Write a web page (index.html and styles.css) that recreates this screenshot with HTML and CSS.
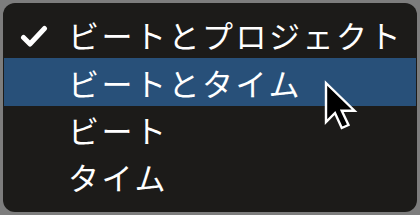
FILE: index.html
```html
<!DOCTYPE html>
<html lang="ja">
<head>
<meta charset="utf-8">
<link rel="stylesheet" href="styles.css">
</head>
<body>
<div class="menu">
  <div class="item">
    <svg class="check" viewBox="0 0 28 24" width="28" height="24"><path d="M3.5 13.5 L10 20 L24.5 4.5" fill="none" stroke="#fff" stroke-width="5" stroke-linecap="round" stroke-linejoin="round"/></svg>
    <span class="label">ビートとプロジェクト</span>
  </div>
  <div class="item selected"><span class="label">ビートとタイム</span></div>
  <div class="item"><span class="label">ビート</span></div>
  <div class="item"><span class="label">タイム</span></div>
  <svg class="cursor" viewBox="0 0 24 36" width="38" height="54"><path d="M2 2 L2 28 L8 22 L12.5 32 L17 30 L12.5 20.5 L21 20.5 Z" fill="#000" stroke="#fff" stroke-width="1.6" stroke-linejoin="miter"/></svg>
</div>
</body>
</html>
```

FILE: styles.css
```css
html, body {
  margin: 0;
  padding: 0;
}
body {
  width: 420px;
  height: 215px;
  background: #7d7d7d;
  padding: 3px;
  box-sizing: border-box;
  overflow: hidden;
}
.menu {
  position: relative;
  height: 209px;
  background: #1c1b19;
  border-radius: 12px;
  padding: 8px 1px 0 1px;
  box-sizing: border-box;
}
.item {
  position: relative;
  height: 47px;
  display: flex;
  align-items: center;
  padding-left: 64px;
  color: #ffffff;
  font-family: "Noto Sans CJK JP", sans-serif;
  font-size: 31px;
  letter-spacing: 2.5px;
}
.selected {
  height: 48px;
  background: #285079;
}
.label {
  line-height: 1;
}
.check {
  position: absolute;
  left: 16px;
  top: 13px;
}
.cursor {
  position: absolute;
  left: 319px;
  top: 77px;
}
```
